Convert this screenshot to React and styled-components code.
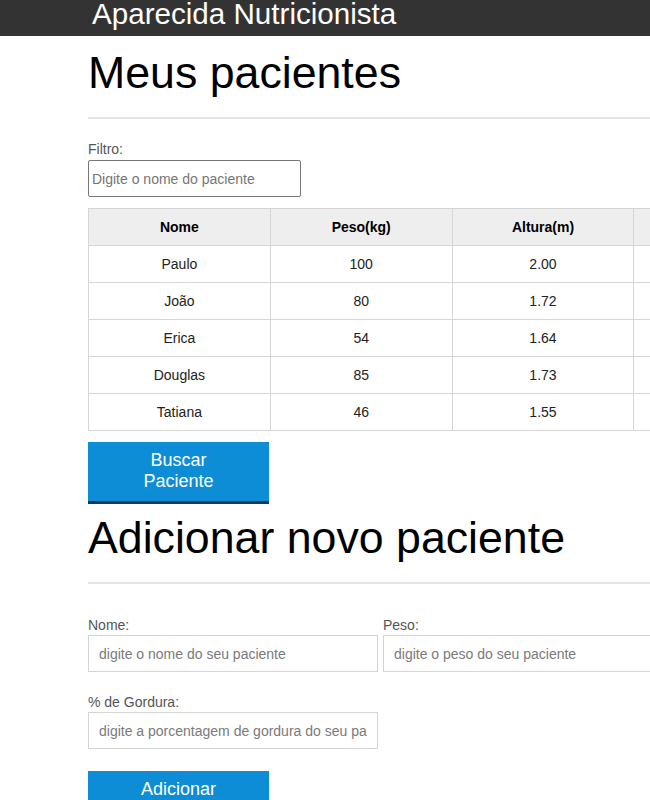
import React from "react";
import styled, { createGlobalStyle } from "styled-components";

const Global = createGlobalStyle`
  html, body {
    margin: 0;
    padding: 0;
    overflow: hidden;
    background: #fff;
  }
  body {
    font-family: "Liberation Sans", Arial, sans-serif;
    color: #000;
  }
  * { box-sizing: border-box; }
`;

const Header = styled.header`
  background: #333;
  height: 36px;
  padding-left: 92px;
  padding-top: 1px;
`;

const Brand = styled.h1`
  margin: 0;
  font-size: 29.6px;
  line-height: 26px;
  font-weight: normal;
  color: #fff;
  white-space: nowrap;
`;

const Main = styled.main`
  padding-left: 88px;
  width: 1100px;
`;

const Section = styled.section`
  display: flex;
  flex-direction: column;
  align-items: flex-start;
`;

const Title = styled.h2`
  margin: ${(p) => p.$top}px 0 0 0;
  font-size: 44.7px;
  line-height: 52px;
  font-weight: normal;
  white-space: nowrap;
`;

const Rule = styled.hr`
  align-self: stretch;
  margin: 18px 0 0 0;
  border: 0;
  height: 2px;
  background: #e4e4e4;
`;

const Label = styled.label`
  display: block;
  font-size: 14px;
  line-height: 16px;
  color: #555;
  margin-top: ${(p) => p.$top}px;
  margin-bottom: ${(p) => p.$bottom}px;
`;

const FilterInput = styled.input`
  width: 213px;
  height: 37px;
  border: 1px solid #767676;
  border-radius: 2px;
  padding: 0 3px;
  font-family: "Liberation Sans", Arial, sans-serif;
  font-size: 14px;
  outline: none;
  &::placeholder { color: #757575; }
`;

const Table = styled.table`
  margin-top: 11px;
  width: 910px;
  table-layout: fixed;
  border-collapse: collapse;
  font-size: 14px;
`;

const Th = styled.th`
  height: 37px;
  background: #eee;
  border: 1px solid #d6d6d6;
  font-weight: bold;
  color: #000;
  text-align: center;
  padding: 0;
`;

const Td = styled.td`
  height: 37px;
  border: 1px solid #d6d6d6;
  text-align: center;
  color: #222;
  padding: 0;
`;

const Button = styled.button`
  width: 181px;
  margin-top: ${(p) => p.$top}px;
  padding: 8px 30px 9px;
  background: #0d8dd5;
  border: 0;
  border-bottom: 3px solid #0a3b59;
  color: #fff;
  font-family: "Liberation Sans", Arial, sans-serif;
  font-size: 18px;
  line-height: 21px;
  text-align: center;
  cursor: pointer;
`;

const FormRow = styled.div`
  display: flex;
  gap: 5px;
  margin-top: ${(p) => p.$top}px;
`;

const Field = styled.div`
  display: flex;
  flex-direction: column;
`;

const FormInput = styled.input`
  width: 290px;
  height: 37px;
  border: 1px solid #d4d4d4;
  padding: 0 10px;
  font-family: "Liberation Sans", Arial, sans-serif;
  font-size: 14px;
  outline: none;
  &::placeholder { color: #7a7a7a; }
`;

const patients = [
  ["Paulo", "100", "2.00", "10", "0"],
  ["João", "80", "1.72", "40", "0"],
  ["Erica", "54", "1.64", "14", "0"],
  ["Douglas", "85", "1.73", "24", "0"],
  ["Tatiana", "46", "1.55", "19", "0"],
];

export default function App() {
  return (
    <>
      <Global />
      <Header>
        <Brand>Aparecida Nutricionista</Brand>
      </Header>
      <Main>
        <Section>
          <Title $top={11}>Meus pacientes</Title>
          <Rule />
          <Label $top={22} $bottom={3} htmlFor="filtro">Filtro:</Label>
          <FilterInput id="filtro" placeholder="Digite o nome do paciente" />
          <Table>
            <thead>
              <tr>
                <Th>Nome</Th>
                <Th>Peso(kg)</Th>
                <Th>Altura(m)</Th>
                <Th>Gordura Corporal(%)</Th>
                <Th>IMC</Th>
              </tr>
            </thead>
            <tbody>
              {patients.map((p) => (
                <tr key={p[0]}>
                  <Td>{p[0]}</Td>
                  <Td>{p[1]}</Td>
                  <Td>{p[2]}</Td>
                  <Td>{p[3]}</Td>
                  <Td>{p[4]}</Td>
                </tr>
              ))}
            </tbody>
          </Table>
          <Button $top={11}>Buscar Paciente</Button>
        </Section>
        <Section>
          <Title $top={8}>Adicionar novo paciente</Title>
          <Rule />
          <FormRow $top={33}>
            <Field>
              <Label $top={0} $bottom={2}>Nome:</Label>
              <FormInput placeholder="digite o nome do seu paciente" />
            </Field>
            <Field>
              <Label $top={0} $bottom={2}>Peso:</Label>
              <FormInput placeholder="digite o peso do seu paciente" />
            </Field>
          </FormRow>
          <FormRow $top={22}>
            <Field>
              <Label $top={0} $bottom={2}>% de Gordura:</Label>
              <FormInput placeholder="digite a porcentagem de gordura do seu paciente" />
            </Field>
          </FormRow>
          <Button $top={22}>Adicionar</Button>
        </Section>
      </Main>
    </>
  );
}
